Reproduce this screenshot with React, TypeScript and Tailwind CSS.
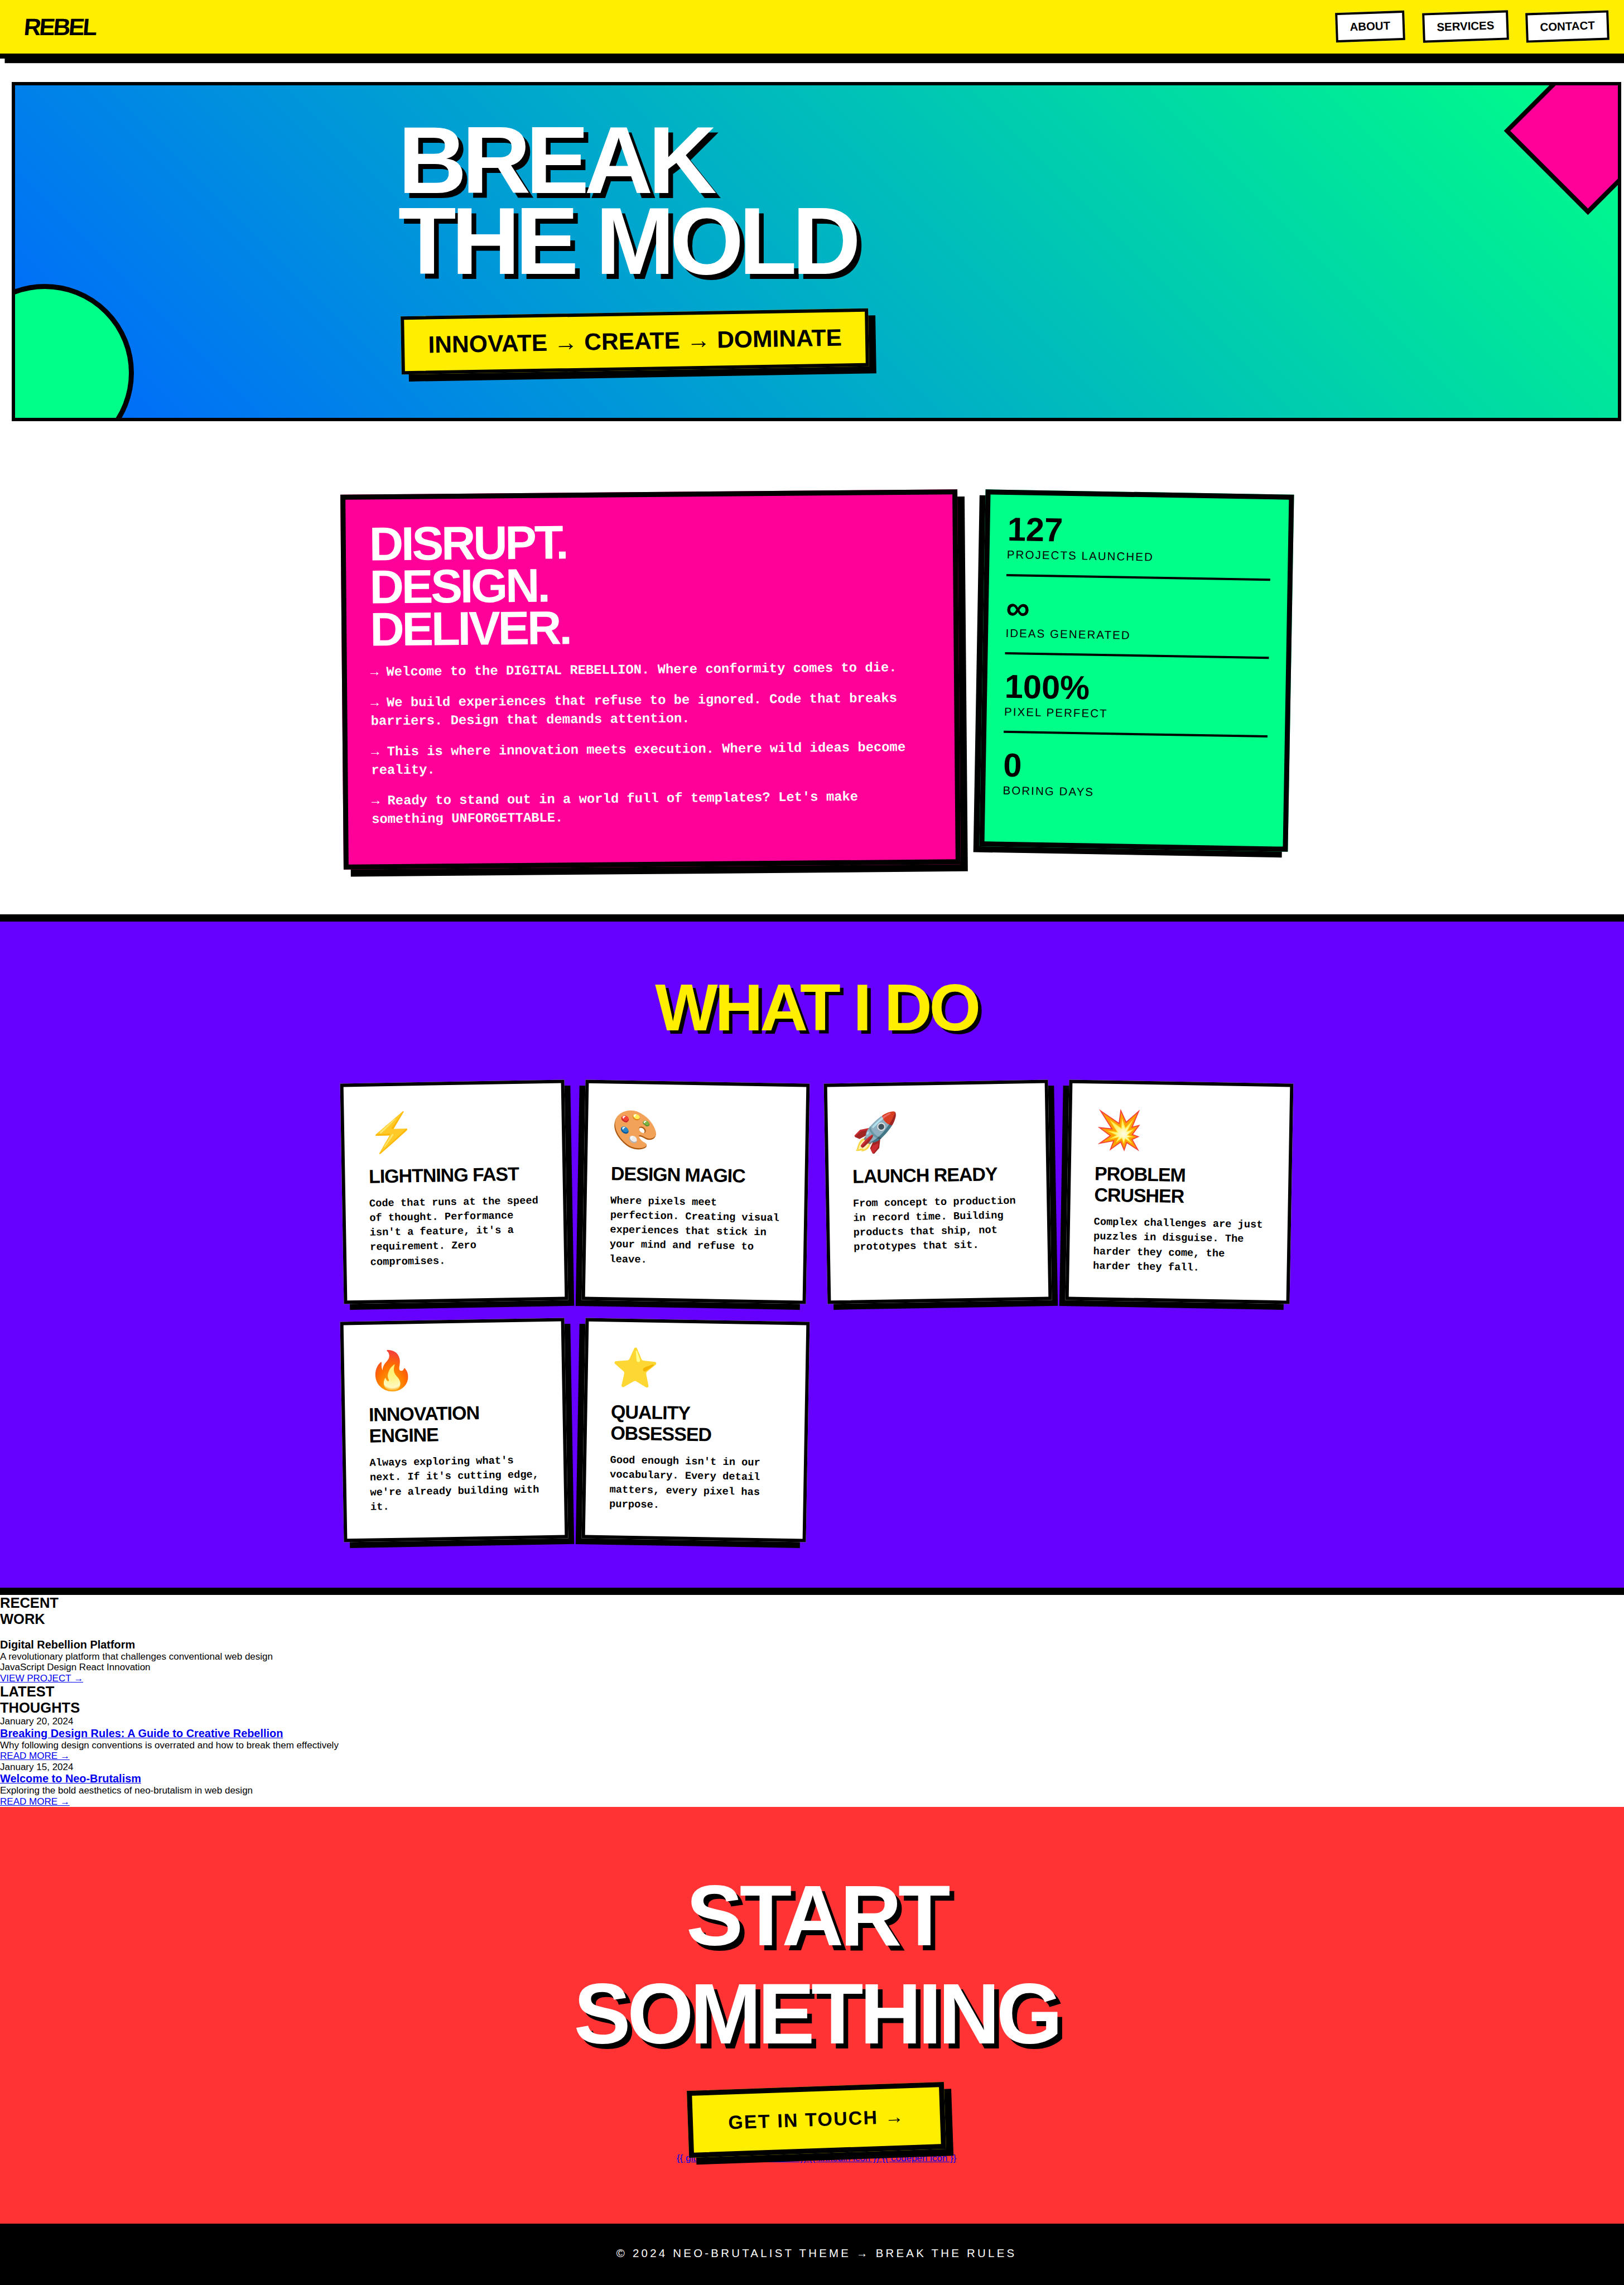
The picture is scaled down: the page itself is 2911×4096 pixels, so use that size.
const navLinks = ["ABOUT", "SERVICES", "CONTACT"];

const intro = [
  "→ Welcome to the DIGITAL REBELLION. Where conformity comes to die.",
  "→ We build experiences that refuse to be ignored. Code that breaks barriers. Design that demands attention.",
  "→ This is where innovation meets execution. Where wild ideas become reality.",
  "→ Ready to stand out in a world full of templates? Let's make something UNFORGETTABLE.",
];

const stats = [
  { value: "127", label: "PROJECTS LAUNCHED" },
  { value: "∞", label: "IDEAS GENERATED" },
  { value: "100%", label: "PIXEL PERFECT" },
  { value: "0", label: "BORING DAYS" },
];

const services = [
  {
    icon: "⚡",
    title: "LIGHTNING FAST",
    text: "Code that runs at the speed of thought. Performance isn't a feature, it's a requirement. Zero compromises.",
  },
  {
    icon: "🎨",
    title: "DESIGN MAGIC",
    text: "Where pixels meet perfection. Creating visual experiences that stick in your mind and refuse to leave.",
  },
  {
    icon: "🚀",
    title: "LAUNCH READY",
    text: "From concept to production in record time. Building products that ship, not prototypes that sit.",
  },
  {
    icon: "💥",
    title: "PROBLEM CRUSHER",
    text: "Complex challenges are just puzzles in disguise. The harder they come, the harder they fall.",
  },
  {
    icon: "🔥",
    title: "INNOVATION ENGINE",
    text: "Always exploring what's next. If it's cutting edge, we're already building with it.",
  },
  {
    icon: "⭐",
    title: "QUALITY OBSESSED",
    text: "Good enough isn't in our vocabulary. Every detail matters, every pixel has purpose.",
  },
];

const posts = [
  {
    date: "January 20, 2024",
    title: "Breaking Design Rules: A Guide to Creative Rebellion",
    text: "Why following design conventions is overrated and how to break them effectively",
  },
  {
    date: "January 15, 2024",
    title: "Welcome to Neo-Brutalism",
    text: "Exploring the bold aesthetics of neo-brutalism in web design",
  },
];

const socials = ["github", "twitter", "linkedin", "codepen"];

function Header() {
  return (
    <header className="flex h-[105px] items-center justify-between border-b-[9px] border-black bg-[#ffee00] px-[42.5px] shadow-[8.5px_8.2px_0_#000]">
      <div className="-skew-x-[5deg] text-[42.55px] leading-[49px] font-bold tracking-[-3.19px]">REBEL</div>
      <nav className="flex gap-[31.9px]">
        {navLinks.map((label) => (
          <a
            key={label}
            href="#"
            className="-rotate-2 border-4 border-black bg-white px-[21.5px] py-[11px] text-[20.42px] leading-[23.4px] font-bold"
          >
            {label}
          </a>
        ))}
      </nav>
    </header>
  );
}

function Hero() {
  return (
    <section className="relative mx-[21.3px] mt-[42px] h-[608px] overflow-hidden border-6 border-black bg-[linear-gradient(45deg,#0066ff,#00ff88)]">
      <div className="absolute -top-[25.5px] -right-[53.2px] size-[212.7px] rotate-45 border-[8.6px] border-black bg-[#ff0099]" />
      <div className="absolute -bottom-[79.1px] -left-[106.4px] size-[319px] rounded-full border-[9px] border-black bg-[#00ff88]" />
      <div className="relative mx-auto flex w-[1489px] flex-col items-start pt-[62.2px]">
        <h1 className="-ml-[5.3px] text-[170.2px] leading-[144.66px] font-bold tracking-[-8.51px] text-white [text-shadow:8.5px_8.5px_0_#000]">
          BREAK
          <br />
          THE MOLD
        </h1>
        <p className="mt-[55px] -rotate-1 border-6 border-black bg-[#ffee00] px-[42.5px] py-[21.3px] text-[42.55px] leading-[48.9px] font-bold whitespace-nowrap shadow-[12.8px_12.8px_0_#000]">
          INNOVATE → CREATE → DOMINATE
        </p>
      </div>
    </section>
  );
}

function About() {
  return (
    <section className="mx-auto grid w-[1701.8px] grid-cols-[2fr_1fr] items-start gap-[42.5px] pt-[127px] pb-[85.3px]">
      <div className="h-[671.7px] -rotate-[0.5deg] border-[9px] border-black bg-[#ff0099] p-[42px] text-white shadow-[12.8px_12.8px_0_#000]">
        <h2 className="mb-[21.3px] text-[85.09px] leading-[76.58px] font-bold tracking-[-4.25px]">
          DISRUPT.
          <br />
          DESIGN.
          <br />
          DELIVER.
        </h2>
        {intro.map((text) => (
          <p
            key={text}
            className="mb-[21.3px] font-['Liberation_Mono',monospace] text-[23.83px] leading-[33.36px] font-bold"
          >
            {text}
          </p>
        ))}
      </div>
      <div className="h-[640px] rotate-1 border-[9px] border-black bg-[#00ff88] p-[31.4px] shadow-[-10.6px_10.6px_0_#000]">
        {stats.map((s) => (
          <div key={s.label} className="mb-[26.6px] border-b-4 border-black pb-[21.5px] last:border-b-0">
            <div className="pt-px text-[59.56px] leading-[59.56px] font-bold">{s.value}</div>
            <div className="mt-[4.3px] text-[20.42px] leading-[23.8px] tracking-[2.13px]">{s.label}</div>
          </div>
        ))}
      </div>
    </section>
  );
}

function Services() {
  return (
    <section className="border-y-[13px] border-black bg-[#6600ff] pt-[84.7px] pb-[85.3px]">
      <h2 className="mb-[65px] text-center text-[119.13px] leading-[137px] font-bold tracking-[-5.32px] text-[#ffee00] [text-shadow:6.4px_6.4px_0_#000]">
        WHAT I DO
      </h2>
      <div className="mx-auto grid w-[1701.8px] auto-rows-[395.2px] grid-cols-4 gap-[31.9px]">
        {services.map((s) => (
          <article
            key={s.title}
            className="border-6 border-black bg-white p-[42.5px] odd:-rotate-1 odd:shadow-[10.6px_10.6px_0_#000] even:rotate-1 even:shadow-[-10.6px_10.6px_0_#000]"
          >
            <div className="mb-[21.2px] h-[78px] text-[68.07px] leading-[78px]">{s.icon}</div>
            <h3 className="mb-[16.9px] text-[34.04px] leading-[38.3px] font-bold tracking-[-1.06px]">{s.title}</h3>
            <p className="font-['Liberation_Mono',monospace] text-[18.72px] leading-[26.2px] font-bold">{s.text}</p>
          </article>
        ))}
      </div>
    </section>
  );
}

function Listings() {
  return (
    <section className="h-[380.1px] text-[17.02px] leading-[19.57px]">
      <h2 className="mb-[19.4px] text-[25.53px] leading-[28.93px] font-bold">
        RECENT
        <br />
        WORK
      </h2>
      <h3 className="text-[19.91px] leading-[23px] font-bold">Digital Rebellion Platform</h3>
      <p>A revolutionary platform that challenges conventional web design</p>
      <p>JavaScript Design React Innovation</p>
      <p>
        <a href="#" className="text-[#0000ee] underline">
          VIEW PROJECT →
        </a>
      </p>
      <h2 className="text-[25.53px] leading-[28.93px] font-bold">
        LATEST
        <br />
        THOUGHTS
      </h2>
      {posts.map((p) => (
        <article key={p.title}>
          <p>{p.date}</p>
          <h3 className="text-[19.91px] leading-[23px] font-bold">
            <a href="#" className="text-[#0000ee] underline">
              {p.title}
            </a>
          </h3>
          <p>{p.text}</p>
          <p>
            <a href="#" className="text-[#0000ee] underline">
              READ MORE →
            </a>
          </p>
        </article>
      ))}
    </section>
  );
}

function Contact() {
  return (
    <section className="flex h-[746.3px] flex-col items-center bg-[#ff3333] pt-[106.4px]">
      <h2 className="text-center text-[153.17px] leading-[176.1px] font-bold tracking-[-6.38px] text-white [text-shadow:8.5px_8.5px_0_#000]">
        START
        <br />
        SOMETHING
      </h2>
      <a
        href="#"
        className="z-10 mt-[42.5px] -rotate-2 border-[9px] border-black bg-[#ffee00] px-[63.3px] py-[31.4px] text-[34.04px] leading-[39.1px] font-bold tracking-[2.13px] whitespace-nowrap shadow-[12.8px_12.8px_0_#000]"
      >
        GET IN TOUCH →
      </a>
      <div className="-mt-px text-[17.02px] leading-[19.57px] text-[#0000ee] underline">
        {socials.map((name) => (
          <a key={name} href="#">{`{{ ${name} icon }} `}</a>
        ))}
      </div>
    </section>
  );
}

export default function App() {
  return (
    <div className="h-[4096px] w-full overflow-hidden bg-white font-['Liberation_Sans',Arial,sans-serif] text-black">
      <div className="w-[2927.2px]">
        <Header />
        <Hero />
        <About />
        <Services />
        <Listings />
        <Contact />
        <footer className="flex h-[112px] justify-center bg-black pt-[42.5px] text-[20.42px] leading-[23.8px] tracking-[4.25px] text-white">
          © 2024 NEO-BRUTALIST THEME → BREAK THE RULES
        </footer>
      </div>
    </div>
  );
}
